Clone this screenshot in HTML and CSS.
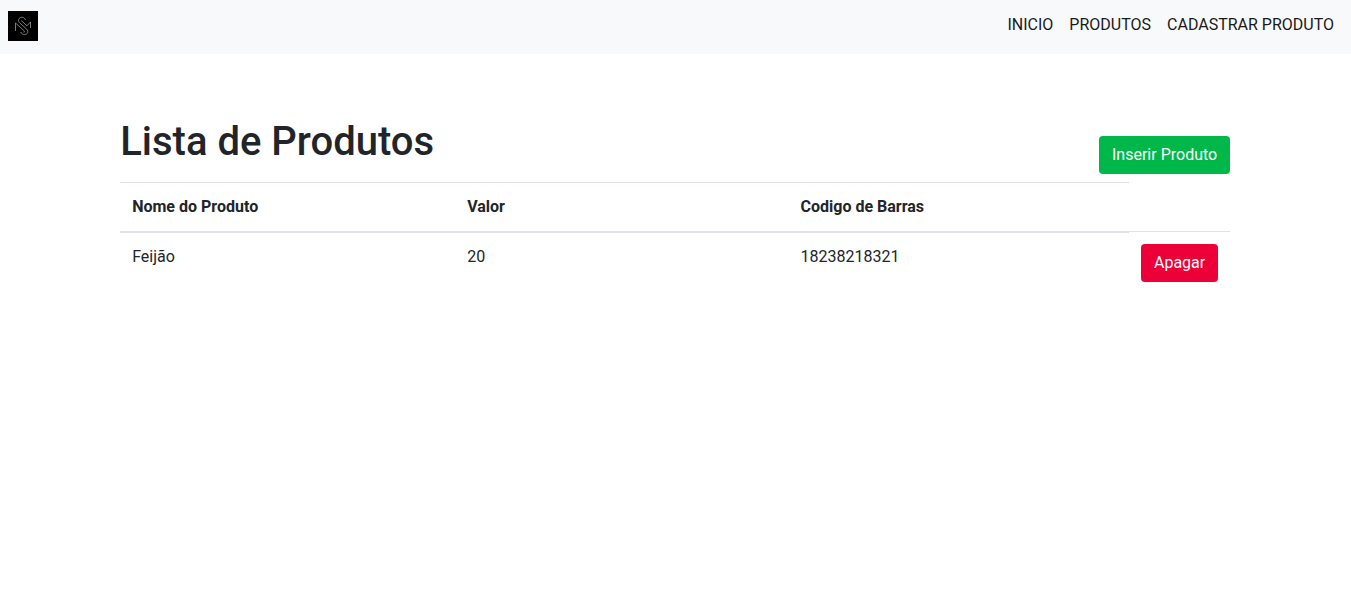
FILE: index.html
```html
<!DOCTYPE html>
<html lang="pt-BR">
<head>
<meta charset="utf-8">
<title>Lista de Produtos</title>
<link rel="stylesheet" href="styles.css">
</head>
<body>
<nav class="navbar">
  <a class="brand" href="#" aria-label="Inicio">
    <svg class="logo" viewBox="0 0 30 30" fill="none" stroke="#999" stroke-width=".8">
      <rect width="30" height="30" fill="#000" stroke="none"/>
      <path d="M17.5 9C16.5 5.5 12 5.5 10.8 8.2c-.8 1.8.1 3 1.2 4l6.5 5.8c3 2.8.5 5.8-2 5.5-1.8-.2-3.2-.8-3.8-2.5"/>
      <path d="M7.5 20v-8l8.3 7.5c1.2 1 .8 1.8-.2 1.5M13.2 9.5l5.8 5.3 3.5-3.9v6"/>
    </svg>
  </a>
  <div class="nav-links">
    <a href="#">INICIO</a>
    <a href="#">PRODUTOS</a>
    <a href="#">CADASTRAR PRODUTO</a>
  </div>
</nav>
<main class="container">
  <header class="heading">
    <h1>Lista de Produtos</h1>
    <a class="btn btn-success" href="#">Inserir Produto</a>
  </header>
  <table class="table">
    <thead>
      <tr><th class="name">Nome do Produto</th><th class="price">Valor</th><th class="code">Codigo de Barras</th></tr>
    </thead>
    <tbody>
      <tr><td>Feijão</td><td>20</td><td>18238218321</td><td class="action"><button class="btn btn-danger">Apagar</button></td></tr>
    </tbody>
  </table>
</main>
</body>
</html>
```
FILE: styles.css
```css
* { box-sizing: border-box; }
body {
  margin: 0;
  font: 400 16px/1.5 Roboto, sans-serif;
  color: #212529;
  background: #fff;
}
a { text-decoration: none; }
.navbar {
  display: flex;
  justify-content: space-between;
  height: 54px;
  padding: 11px 17px 0 8px;
  background: #f8f9fa;
}
.logo { display: block; width: 30px; height: 30px; }
.nav-links { display: flex; gap: 16px; padding-top: 2px; }
.nav-links a { color: #1a1a1a; }
.container { width: 1110px; margin: 64px 0 0 120.2px; }
.heading {
  display: flex;
  justify-content: space-between;
  align-items: flex-end;
  height: 56px;
  margin-bottom: 8px;
}
h1 { align-self: flex-start; margin: 0; font-size: 40px; line-height: 48px; font-weight: 500; }
.btn {
  display: block;
  padding: 6px 12px;
  border: 1px solid transparent;
  border-radius: 4px;
  font: inherit;
  color: #fff;
}
.btn-success { background: #00b74a; }
.btn-danger { background: #ed0038; }
.table { width: 100%; border-collapse: collapse; }
.table th, .table td {
  padding: 12px;
  text-align: left;
  vertical-align: top;
  border-top: 1px solid #dee2e6;
}
.table th { border-bottom: 2px solid #dee2e6; font-weight: 700; }
.table .action { border-top: 0; box-shadow: 0 -1px 0 #dee2e6; }
.name { width: 335px; }
.price { width: 333.4px; }
.code { width: 340.4px; }
```
